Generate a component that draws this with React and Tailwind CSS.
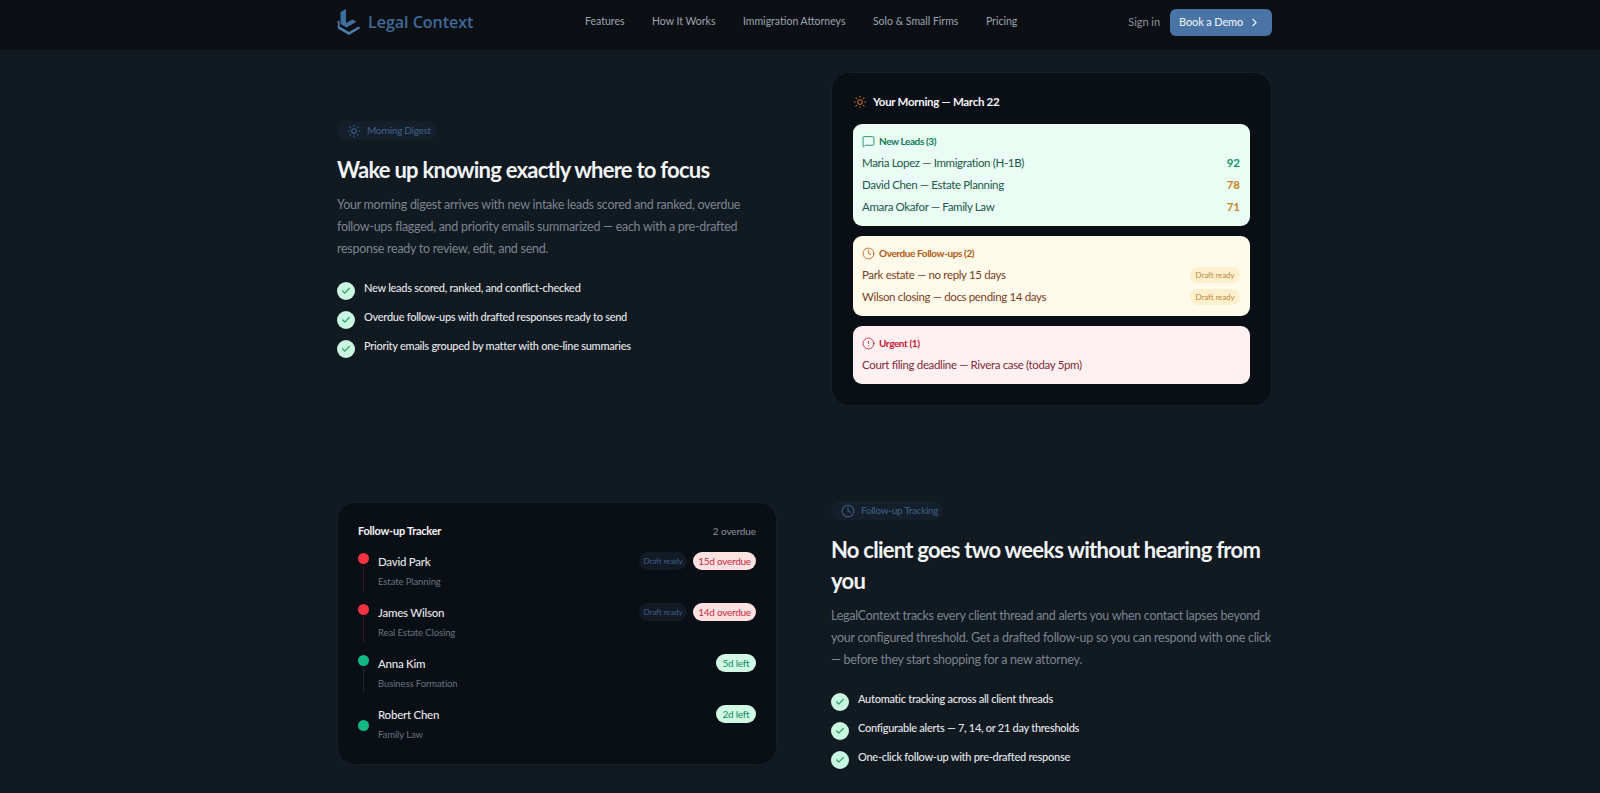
import React from "react";
import { Sun, MessageSquare, Clock, CircleAlert, ChevronRight, Check } from "lucide-react";

function Logo() {
  return (
    <svg width="24" height="28" viewBox="0 0 24 28" fill="none" className="shrink-0">
      <path d="M3.5 4 L9 1 V15 L15.5 11.5 L19.5 13.7 L9.5 19.5 L3.5 16 Z" fill="#3f6d9e" />
      <path d="M0.8 12.5 L2.5 13.5 V18.5 L12 24 L21.5 18.5 L23.5 20 L12 27 L0.8 20.5 Z" fill="#4f7fb0" />
    </svg>
  );
}

function Tag({ icon: Icon, children, width }) {
  return (
    <div className={`flex h-[19px] items-center gap-[6px] rounded-full bg-[#151f2b] pl-[10px] ${width}`}>
      <Icon size={14} strokeWidth={1.75} className="text-[#3f618a]" />
      <span className="whitespace-nowrap text-[10px] tracking-[-0.3px] text-[#3f618a]">{children}</span>
    </div>
  );
}

function CheckItem({ children }) {
  return (
    <li className="flex h-[29px] items-center gap-[9px]">
      <span className="flex h-[18px] w-[18px] shrink-0 translate-y-[1px] items-center justify-center rounded-full bg-[#c9f7e1]">
        <Check size={10} strokeWidth={3} className="text-[#2f9d72]" />
      </span>
      <span className="-translate-y-[1px] text-[11px] font-medium tracking-[-0.27px] text-[#e5e7eb]">{children}</span>
    </li>
  );
}

function Copy({ tag, tagIcon, tagWidth, title, text }) {
  return (
    <div>
      <Tag icon={tagIcon} width={tagWidth}>{tag}</Tag>
      <h2 className="mt-[14px] text-[22px] font-bold leading-[31px] tracking-[-0.75px] text-[#f3f4f6]">{title}</h2>
      <p className="mt-[9px] text-[12.5px] leading-[22px] tracking-[-0.28px] text-[#7c8490]">{text}</p>
    </div>
  );
}

function Panel({ bg, head, headColor, icon: Icon, children, h }) {
  return (
    <div className={`rounded-[9px] pl-[9px] pr-[10px] pt-[8px] ${bg} ${h}`}>
      <div className={`flex h-[18px] items-center gap-[4px] text-[10px] font-bold tracking-[-0.4px] ${headColor}`}>
        <Icon size={13} strokeWidth={1.5} />
        <span>{head}</span>
      </div>
      <div className="mt-[2px]">{children}</div>
    </div>
  );
}

function Row({ color, children, right }) {
  return (
    <div className="flex h-[22px] items-center justify-between">
      <span className={`text-[11.5px] tracking-[-0.35px] ${color}`}>{children}</span>
      {right}
    </div>
  );
}

function Score({ color, children }) {
  return <span className={`text-[11.5px] font-bold ${color}`}>{children}</span>;
}

function DraftChip() {
  return (
    <span className="flex h-[16px] w-[50px] items-center justify-center rounded-full bg-[#fdf0cd] text-[8px] tracking-[-0.1px] text-[#bb8a3c]">
      Draft ready
    </span>
  );
}

function Tracker({ dot, line, name, sub, badge, badgeClass, draft, low }) {
  return (
    <div className="flex h-[51px]">
      <div className="flex w-[20px] flex-col items-start">
        <span className={`h-[11px] w-[11px] rounded-full ${dot} ${low ? "mt-[15px]" : "mt-[1px]"}`} />
        {line && <span className={`ml-[5px] mt-[2px] h-[25px] w-px ${line}`} />}
      </div>
      <div className="flex-1">
        <div className="text-[11.5px] font-medium leading-[20px] tracking-[-0.25px] text-[#e5e7eb]">{name}</div>
        <div className="text-[9.5px] leading-[20px] tracking-[-0.1px] text-[#6b7280]">{sub}</div>
      </div>
      <div className="flex h-[18px] items-center gap-[6px]">
        {draft && (
          <span className="flex h-[18px] w-[48px] items-center justify-center rounded-full bg-[#111a25] text-[8px] tracking-[-0.1px] text-[#3f5f88]">
            Draft ready
          </span>
        )}
        <span className={`flex h-[18px] items-center justify-center rounded-full text-[10px] tracking-[-0.25px] ${badgeClass}`}>{badge}</span>
      </div>
    </div>
  );
}

export default function App() {
  return (
    <div className="h-[793px] overflow-hidden bg-[#111921] font-['Lato','Liberation_Sans',sans-serif]">
      <header className="h-[50px] bg-[#0c1015]">
        <div className="ml-[337px] flex h-[44px] w-[935px] items-center">
          <div className="flex w-[248px] items-center gap-[7px]">
            <Logo />
            <span className="font-['Open_Sans','Liberation_Sans',sans-serif] text-[16px] font-semibold text-[#3f6a99]">Legal Context</span>
          </div>
          <nav className="flex items-center gap-[27.5px] text-[10.5px] text-[#9ca3af]">
            <span>Features</span>
            <span>How It Works</span>
            <span>Immigration Attorneys</span>
            <span>Solo &amp; Small Firms</span>
            <span>Pricing</span>
          </nav>
          <div className="ml-auto flex items-center gap-[10px]">
            <span className="text-[11px] tracking-[-0.05px] text-[#8b929c]">Sign in</span>
            <button className="flex h-[27px] w-[102px] items-center justify-between rounded-[6px] bg-[#4a74a6] pl-[9px] pr-[11px] text-[11px] font-medium tracking-[-0.15px] text-[#e8eef5]">
              Book a Demo
              <ChevronRight size={13} strokeWidth={2} />
            </button>
          </div>
        </div>
      </header>

      <main className="ml-[337px] w-[935px]">
        <section className="mt-[22px] grid grid-cols-[440px_441px] items-start gap-[54px]">
          <div className="pt-[49px]">
            <Copy
              tag="Morning Digest"
              tagIcon={Sun}
              tagWidth="w-[100px]"
              title="Wake up knowing exactly where to focus"
              text="Your morning digest arrives with new intake leads scored and ranked, overdue follow-ups flagged, and priority emails summarized — each with a pre-drafted response ready to review, edit, and send."
            />
            <ul className="mt-[15px]">
              <CheckItem>New leads scored, ranked, and conflict-checked</CheckItem>
              <CheckItem>Overdue follow-ups with drafted responses ready to send</CheckItem>
              <CheckItem>Priority emails grouped by matter with one-line summaries</CheckItem>
            </ul>
          </div>

          <div className="h-[334px] rounded-[18px] border border-[#161e28] bg-[#0a0f15] px-[21px] pt-[18px]">
            <div className="flex h-[22px] items-center gap-[6px]">
              <Sun size={14} strokeWidth={1.75} className="text-[#b5622a]" />
              <span className="text-[11.5px] font-bold tracking-[-0.3px] text-[#f3f4f6]">Your Morning — March 22</span>
            </div>
            <div className="mt-[11px] flex flex-col gap-[10px]">
              <Panel bg="bg-[#e9fdf5]" h="h-[102px]" head="New Leads (3)" headColor="text-[#0f7a58]" icon={MessageSquare}>
                <Row color="text-[#22574a]" right={<Score color="text-[#14936a]">92</Score>}>Maria Lopez — Immigration (H-1B)</Row>
                <Row color="text-[#22574a]" right={<Score color="text-[#cf8122]">78</Score>}>David Chen — Estate Planning</Row>
                <Row color="text-[#22574a]" right={<Score color="text-[#cf8122]">71</Score>}>Amara Okafor — Family Law</Row>
              </Panel>
              <Panel bg="bg-[#fffaea]" h="h-[80px]" head="Overdue Follow-ups (2)" headColor="text-[#b4590f]" icon={Clock}>
                <Row color="text-[#7a3f1c]" right={<DraftChip />}>Park estate — no reply 15 days</Row>
                <Row color="text-[#7a3f1c]" right={<DraftChip />}>Wilson closing — docs pending 14 days</Row>
              </Panel>
              <Panel bg="bg-[#fff1f1]" h="h-[58px]" head="Urgent (1)" headColor="text-[#c5173a]" icon={CircleAlert}>
                <Row color="text-[#7f2a38]">Court filing deadline — Rivera case (today 5pm)</Row>
              </Panel>
            </div>
          </div>
        </section>

        <section className="mt-[96px] grid grid-cols-[440px_441px] items-start gap-[54px]">
          <div className="h-[263px] rounded-[18px] border border-[#161e28] bg-[#0a0f15] px-[20px] pt-[18px]">
            <div className="flex h-[20px] items-center justify-between">
              <span className="text-[11px] font-bold tracking-[-0.25px] text-[#f3f4f6]">Follow-up Tracker</span>
              <span className="text-[10px] tracking-[-0.1px] text-[#8b929c]">2 overdue</span>
            </div>
            <div className="mt-[11px]">
              <Tracker dot="bg-[#ef3340]" line="bg-[#3a1c22]" name="David Park" sub="Estate Planning" badge="15d overdue" badgeClass="w-[63px] bg-[#fee2e2] text-[#c5283d]" draft />
              <Tracker dot="bg-[#ef3340]" line="bg-[#3a1c22]" name="James Wilson" sub="Real Estate Closing" badge="14d overdue" badgeClass="w-[63px] bg-[#fee2e2] text-[#c5283d]" draft />
              <Tracker dot="bg-[#10b981]" line="bg-[#10302a]" name="Anna Kim" sub="Business Formation" badge="5d left" badgeClass="w-[40px] bg-[#d1fae5] text-[#0f8a60]" />
              <Tracker dot="bg-[#10b981]" low name="Robert Chen" sub="Family Law" badge="2d left" badgeClass="w-[40px] bg-[#d1fae5] text-[#0f8a60]" />
            </div>
          </div>

          <div className="-mt-[1px]">
            <Copy
              tag="Follow-up Tracking"
              tagIcon={Clock}
              tagWidth="w-[112px]"
              title="No client goes two weeks without hearing from you"
              text="LegalContext tracks every client thread and alerts you when contact lapses beyond your configured threshold. Get a drafted follow-up so you can respond with one click — before they start shopping for a new attorney."
            />
            <ul className="mt-[15px]">
              <CheckItem>Automatic tracking across all client threads</CheckItem>
              <CheckItem>Configurable alerts — 7, 14, or 21 day thresholds</CheckItem>
              <CheckItem>One-click follow-up with pre-drafted response</CheckItem>
            </ul>
          </div>
        </section>
      </main>
    </div>
  );
}
